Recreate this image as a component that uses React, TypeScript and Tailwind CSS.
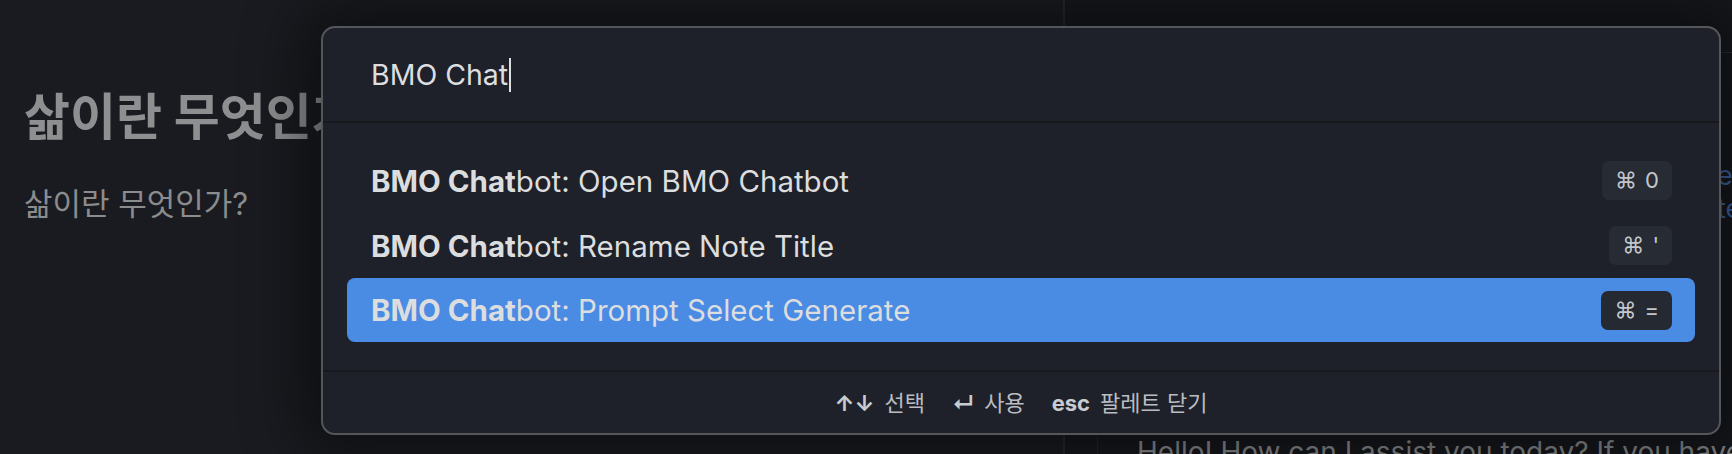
import React from "react";

const rows = [
  { rest: "bot: Open BMO Chatbot", key: "0", selected: false },
  { rest: "bot: Rename Note Title", key: "'", selected: false },
  { rest: "bot: Prompt Select Generate", key: "=", selected: true },
];

export default function App() {
  return (
    <div className="relative w-[1732px] h-[454px] overflow-hidden bg-[#16181d] font-['Inter','Noto_Sans_CJK_KR',sans-serif]">
      {/* background workspace */}
      <div className="flex h-full">
        <div className="w-[1063px] shrink-0 h-full bg-[#191b20] pl-[24px] pt-[88px] overflow-hidden">
          <div className="text-[50px] leading-[58px] font-bold text-[#8e8f91] whitespace-nowrap">
            삶이란 무엇인가?
          </div>
          <div className="mt-[39px] text-[31px] leading-[38px] text-[#8b8c8e] whitespace-nowrap">
            삶이란 무엇인가?
          </div>
        </div>
        <div className="w-[2px] shrink-0 h-full bg-[#26282c]" />
        <div className="flex-1 min-w-0 h-full flex flex-col overflow-hidden">
          <div className="h-[53px] shrink-0 border-b border-[#2a2d32]" />
          <div className="flex flex-1 min-w-0">
            <div className="w-[33px] shrink-0 border-r border-[#222428]" />
            <div className="flex-1 min-w-0 flex flex-col overflow-hidden">
              <div className="pl-[619px] pt-[106px] text-[27px] leading-[33px] text-[#3b66a0] whitespace-nowrap">
                <div>es</div>
                <div>te</div>
              </div>
              <div className="mt-[210px] pl-[39px] text-[28px] leading-[34px] text-[#8a8b8e] whitespace-nowrap">
                Hello! How can I assist you today? If you have any questions
              </div>
            </div>
          </div>
        </div>
      </div>

      {/* command palette */}
      <div className="absolute left-[321px] top-[26px] w-[1400px] h-[409px] flex flex-col rounded-[14px] border-2 border-[#54565a] bg-[#1e2129] shadow-[0_0_60px_20px_rgba(0,0,0,0.45)] overflow-hidden">
        <div className="h-[95px] shrink-0 flex items-center pl-[48px] border-b-2 border-[#16181c]">
          <span className="text-[28.5px] leading-[34px] text-[#dddee0]">BMO Chat</span>
          <span className="ml-[1px] w-[2px] h-[34px] bg-[#dddee0]" />
        </div>
        <div className="flex-1 flex flex-col px-[24px] pt-[25px]">
          {rows.map((r, i) => (
            <div
              key={i}
              className={
                r.selected
                  ? "h-[64px] flex items-center justify-between pl-[24px] pr-[23px] rounded-[8px] bg-[#4a8be4]"
                  : "h-[65px] flex items-center justify-between pl-[24px] pr-[23px] rounded-[8px]"
              }
            >
              <span className="text-[29.5px] leading-[36px] text-[#dcdddf] whitespace-nowrap">
                <span className="font-bold">BMO Chat</span>
                {r.rest}
              </span>
              <span
                className={
                  r.selected
                    ? "h-[39px] px-[13px] flex items-center gap-[8px] rounded-[7px] bg-[#242932] text-[22px] text-[#c3c6cc]"
                    : "h-[39px] px-[13px] flex items-center gap-[8px] rounded-[7px] bg-[#272b33] text-[22px] text-[#c3c6cc]"
                }
              >
                <span>⌘</span>
                <span>{r.key}</span>
              </span>
            </div>
          ))}
        </div>
        <div className="h-[63px] shrink-0 border-t-2 border-[#17191d] flex items-center justify-center gap-[27px] text-[22px] leading-[28px] text-[#b9bcc2]">
          <div className="flex items-center gap-[10px]">
            <span className="font-bold text-[#c8cbd0]">↑↓</span>
            <span>선택</span>
          </div>
          <div className="flex items-center gap-[10px]">
            <span className="font-bold text-[#c8cbd0]">↵</span>
            <span>사용</span>
          </div>
          <div className="flex items-center gap-[10px]">
            <span className="font-bold text-[#c8cbd0]">esc</span>
            <span>팔레트 닫기</span>
          </div>
        </div>
      </div>
    </div>
  );
}
